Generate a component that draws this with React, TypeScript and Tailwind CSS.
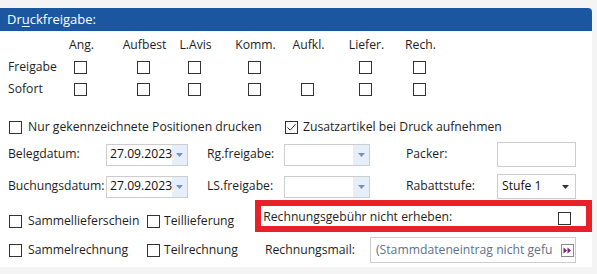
import React from 'react'

const columns = [
  { label: 'Ang.', ml: 'ml-0', freigabe: true },
  { label: 'Aufbest', ml: 'ml-[19px]', freigabe: true },
  { label: 'L.Avis', ml: 'ml-[7px]', freigabe: true },
  { label: 'Komm.', ml: 'ml-[16px]', freigabe: true },
  { label: 'Aufkl.', ml: 'ml-[9px]', freigabe: false },
  { label: 'Liefer.', ml: 'ml-[14px]', freigabe: true },
  { label: 'Rech.', ml: 'ml-[10px]', freigabe: true },
]

function Check({ checked = false }: { checked?: boolean }) {
  return (
    <span className="inline-flex w-[13px] h-[13px] shrink-0 border border-[#333] bg-white items-center justify-center">
      {checked && (
        <svg width="11" height="11" viewBox="0 0 11 11">
          <path d="M1.5 5.5 L4.2 8.2 L9.5 2.2" fill="none" stroke="#333" strokeWidth="1" />
        </svg>
      )}
    </span>
  )
}

function Arrow({ color }: { color: string }) {
  return (
    <svg width="7" height="4" viewBox="0 0 7 4">
      <path d="M0 0 L7 0 L3.5 4 Z" fill={color} />
    </svg>
  )
}

function Combo({ value, width }: { value?: string; width: string }) {
  return (
    <div className={`flex h-[22px] border border-[#cdcdcd] bg-white ${width}`}>
      <div className="flex-1 pl-[3px] flex items-center text-[#111]">{value}</div>
      <div className="w-[16px] bg-[#e6eef9] flex items-center justify-center">
        <Arrow color="#7094c4" />
      </div>
    </div>
  )
}

export default function App() {
  return (
    <div
      className="w-[597px] h-[274px] bg-[#f4f4f4] pt-[8px] overflow-hidden text-[12.2px] leading-none text-[#1e1e1e]"
      style={{ fontFamily: '"Segoe UI", "Open Sans", sans-serif' }}
    >
      <div className="w-[592px] h-[259px] bg-white">
        <div className="h-[23px] bg-[#1a57a0] rounded-tr-[4px] pl-[7px] flex items-center text-white text-[13px]">
          Dr<span className="underline underline-offset-2">u</span>ckfreigabe:
        </div>

        <div className="flex mt-[3px]">
          <div className="w-[58px] pl-[8px] flex flex-col">
            <div className="h-[22px]" />
            <div className="h-[22px] flex items-center">Freigabe</div>
            <div className="h-[22px] flex items-center">Sofort</div>
          </div>
          {columns.map((c) => (
            <div key={c.label} className={`w-[44px] flex flex-col items-center ${c.ml}`}>
              <div className="h-[22px] flex items-center pl-[3px]">{c.label}</div>
              <div className="h-[22px] flex items-center">{c.freigabe && <Check />}</div>
              <div className="h-[22px] flex items-center">
                <Check />
              </div>
            </div>
          ))}
        </div>

        <div className="flex items-center h-[22px] mt-[16px] pl-[9px]">
          <Check />
          <span className="ml-[6px] w-[257px]">Nur gekennzeichnete Positionen drucken</span>
          <Check checked />
          <span className="ml-[5px]">Zusatzartikel bei Druck aufnehmen</span>
        </div>

        <div className="flex items-center h-[25px] mt-[4px] pl-[8px]">
          <span className="w-[98px]">Belegdatum:</span>
          <Combo value="27.09.2023" width="w-[82px]" />
          <span className="ml-[19px] w-[77px]">Rg.freigabe:</span>
          <Combo width="w-[86px]" />
          <span className="ml-[36px] w-[91px]">Packer:</span>
          <div className="w-[79px] h-[25px] border border-[#cdcdcd]" />
        </div>

        <div className="flex items-center h-[25px] mt-[7px] pl-[8px]">
          <span className="w-[98px]">Buchungsdatum:</span>
          <Combo value="27.09.2023" width="w-[82px]" />
          <span className="ml-[19px] w-[77px]">LS.freigabe:</span>
          <Combo width="w-[86px]" />
          <span className="ml-[36px] w-[91px]">Rabattstufe:</span>
          <div className="w-[79px] h-[25px] border border-[#cdcdcd] flex items-center pl-[4px] pr-[6px] justify-between text-[#111]">
            <span>Stufe 1</span>
            <Arrow color="#333" />
          </div>
        </div>

        <div className="flex h-[32px] mt-[1px]">
          <div className="w-[257px] pl-[9px] pt-[15px] flex items-start">
            <Check />
            <span className="ml-[6px] w-[119px]">Sammellieferschein</span>
            <Check />
            <span className="ml-[4px]">Teillieferung</span>
          </div>
          <div className="w-[339px] h-[32px] border-[6px] border-[#e8202a] flex items-end justify-between pl-[2px] pr-[15px] pb-[1px]">
            <span className="mb-[2px]">Rechnungsgebühr nicht erheben:</span>
            <Check />
          </div>
        </div>

        <div className="flex h-[26px] mt-[5px] items-center">
          <div className="w-[257px] pl-[9px] flex items-center">
            <Check />
            <span className="ml-[6px] w-[119px]">Sammelrechnung</span>
            <Check />
            <span className="ml-[4px]">Teilrechnung</span>
          </div>
          <span className="ml-[8px] w-[105px]">Rechnungsmail:</span>
          <div className="w-[206px] h-[26px] border border-[#cdcdcd] flex items-center pl-[5px] pr-[1px] justify-between">
            <span className="text-[#62718a] whitespace-nowrap">(Stammdateneintrag nicht gefu</span>
            <span className="w-[13px] h-[13px] border border-[#8a8a8a] flex items-center justify-center shrink-0">
              <svg width="9" height="7" viewBox="0 0 9 7">
                <path d="M0.5 0.5 L4 3.5 L0.5 6.5 Z M4.5 0.5 L8 3.5 L4.5 6.5 Z" fill="#7a1f7a" />
              </svg>
            </span>
          </div>
        </div>
      </div>
    </div>
  )
}
